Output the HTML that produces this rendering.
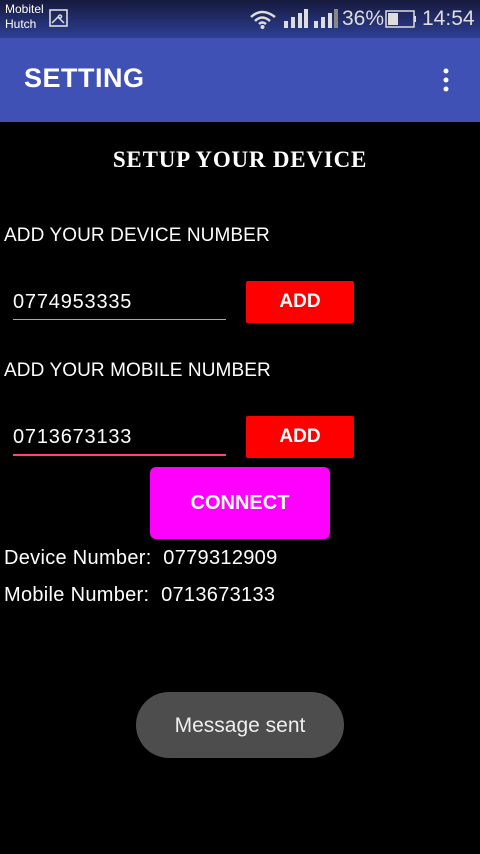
<!DOCTYPE html>
<html><head><style>
*{margin:0;padding:0;box-sizing:border-box}
body{width:480px;height:854px;background:#000;font-family:"Liberation Sans",sans-serif;color:#fff;position:relative;overflow:hidden}
.sb{position:absolute;left:0;top:0;width:480px;height:38px;background:linear-gradient(#161a3d,#2e3f96)}
.ab{position:absolute;left:0;top:38px;width:480px;height:84px;background:#3f51b5}
.t{position:absolute;white-space:nowrap}
.btn{position:absolute;background:#f00;color:#fff;font-weight:bold;font-size:19px;text-align:center;border-radius:2px}
</style></head><body>
<div class="sb"></div>
<div class="t" style="left:5px;top:2px;font-size:12px;line-height:15px">Mobitel<br>Hutch</div>
<svg class="t" style="left:49px;top:9px" width="20" height="19"><rect x="1" y="1" width="17" height="16" fill="none" stroke="#ddd" stroke-width="1.6"/><path d="M3 14 L9 8 L15 14 M11 6a1.5 1.5 0 1 0 .1 0" stroke="#ddd" fill="none" stroke-width="1.5"/></svg>
<svg class="t" style="left:248px;top:9px" width="30" height="20"><path d="M3 8 Q14 -2 27 8 M7 12 Q14 5 22 12 M11 15 Q14 12 18 15" stroke="#ddd" stroke-width="2.5" fill="none"/><circle cx="14.5" cy="18" r="2" fill="#ddd"/></svg>
<svg class="t" style="left:283px;top:9px" width="26" height="19"><rect x="1" y="12" width="4" height="7" fill="#ddd"/><rect x="8" y="8" width="4" height="11" fill="#ddd"/><rect x="15" y="4" width="4" height="15" fill="#ddd"/><rect x="21" y="0" width="4" height="19" fill="#ddd"/></svg>
<svg class="t" style="left:313px;top:9px" width="26" height="19"><rect x="1" y="12" width="4" height="7" fill="#ddd"/><rect x="8" y="8" width="4" height="11" fill="#ddd"/><rect x="15" y="4" width="4" height="15" fill="#ddd"/><rect x="21" y="0" width="4" height="19" fill="#888"/></svg>
<div class="t" style="left:342px;top:7px;font-size:21px;color:#ddd">36%</div>
<svg class="t" style="left:385px;top:10px" width="32" height="18"><rect x="1" y="1" width="28" height="16" fill="none" stroke="#ddd" stroke-width="1.5"/><rect x="3" y="3" width="10" height="12" fill="#ddd"/><rect x="29" y="6" width="2" height="6" fill="#ddd"/></svg>
<div class="t" style="left:422px;top:7px;font-size:21px;color:#ddd">14:54</div>
<div class="ab"></div>
<div class="t" style="left:24px;top:63px;font-size:27px;font-weight:bold;letter-spacing:0.5px">SETTING</div>
<svg class="t" style="left:442px;top:68px" width="8" height="26"><circle cx="4" cy="3" r="2.5" fill="#fff"/><circle cx="4" cy="12" r="2.5" fill="#fff"/><circle cx="4" cy="21" r="2.5" fill="#fff"/></svg>
<div class="t" style="left:0;width:480px;text-align:center;top:147px;font-family:'Liberation Serif',serif;font-weight:bold;font-size:23px;letter-spacing:0.8px">SETUP YOUR DEVICE</div>
<div class="t" style="left:4px;top:225px;font-size:19px;letter-spacing:0.1px">ADD YOUR DEVICE NUMBER</div>
<div class="t" style="left:13px;top:291px;font-size:20px;letter-spacing:0.8px">0774953335</div>
<div class="t" style="left:13px;top:319px;width:213px;height:1px;background:#aaa"></div>
<div class="btn" style="left:246px;top:281px;width:108px;height:42px;line-height:42px">ADD</div>
<div class="t" style="left:4px;top:360px;font-size:19px;letter-spacing:0.1px">ADD YOUR MOBILE NUMBER</div>
<div class="t" style="left:13px;top:426px;font-size:20px;letter-spacing:0.8px">0713673133</div>
<div class="t" style="left:13px;top:454px;width:213px;height:2px;background:#ff4081"></div>
<div class="btn" style="left:246px;top:416px;width:108px;height:42px;line-height:42px">ADD</div>
<div class="btn" style="left:150px;top:467px;width:180px;height:72px;line-height:72px;background:#f0f;border-radius:6px;font-size:20px">CONNECT</div>
<div class="t" style="left:4px;top:547px;font-size:20px;letter-spacing:0.3px">Device Number:&nbsp; 0779312909</div>
<div class="t" style="left:4px;top:584px;font-size:20px;letter-spacing:0.3px">Mobile Number:&nbsp; 0713673133</div>
<div class="t" style="left:136px;top:692px;width:208px;height:66px;border-radius:33px;background:#4d4d4d;text-align:center;line-height:68px;font-size:21px;color:#eee">Message sent</div>
</body></html>
